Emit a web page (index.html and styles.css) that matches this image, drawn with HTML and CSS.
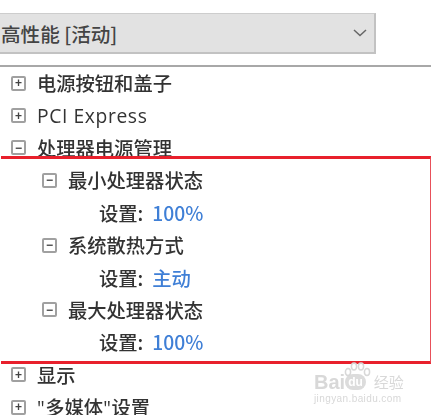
FILE: index.html
```html
<!DOCTYPE html>
<html lang="zh-CN">
<head>
  <meta charset="UTF-8">
  <title>电源选项</title>
  <link rel="stylesheet" href="styles.css">
</head>
<body>
  <div class="page">
    <div class="plan-select">
      <span>高性能 [活动]</span>
      <svg class="chevron" width="14" height="8" viewBox="0 0 14 8"><path d="M1 1l6 5.5L13 1" fill="none" stroke="#666" stroke-width="1.5"/></svg>
    </div>
    <div class="divider"></div>

    <ul class="tree">
      <li class="row"><span class="toggle">+</span>电源按钮和盖子</li>
      <li class="row"><span class="toggle">+</span><span class="latin">PCI Express</span></li>
      <li class="row"><span class="toggle">−</span>处理器电源管理</li>
      <li class="row sub"><span class="toggle">−</span>最小处理器状态</li>
      <li class="row setting">设置:<span class="value">100%</span></li>
      <li class="row sub"><span class="toggle">−</span>系统散热方式</li>
      <li class="row setting">设置:<span class="value">主动</span></li>
      <li class="row sub"><span class="toggle">−</span>最大处理器状态</li>
      <li class="row setting">设置:<span class="value">100%</span></li>
      <li class="row"><span class="toggle">+</span>显示</li>
      <li class="row"><span class="toggle">+</span><span class="latin">"</span>多媒体<span class="latin">"</span>设置</li>
    </ul>
  </div>

  <!-- red highlight drawn on top of the screenshot -->
  <div class="highlight"></div>

  <div class="watermark">
    <svg class="wm-paw" width="28" height="22" viewBox="0 0 28 22">
      <g fill="none" stroke="#d8d8d8" stroke-width="1.5">
        <ellipse cx="5" cy="10" rx="2.6" ry="3.4"/>
        <ellipse cx="11" cy="4.5" rx="2.6" ry="3.4"/>
        <ellipse cx="18" cy="4.5" rx="2.6" ry="3.4"/>
        <ellipse cx="24" cy="10" rx="2.6" ry="3.4"/>
      </g>
    </svg>
    <div class="wm-logo">Bai<span class="wm-du">du</span><span class="wm-cn">经验</span></div>
    <div class="wm-url">jingyan.baidu.com</div>
  </div>
</body>
</html>
```

FILE: styles.css
```css
html, body {
  margin: 0;
  padding: 0;
}
body {
  width: 431px;
  height: 415px;
  overflow: hidden;
  background-color: #ffffff;
  font-family: "Noto Sans CJK SC", "Open Sans", sans-serif;
  color: #333;
}
.page {
  filter: blur(0.7px);
  padding-top: 13px;
}
.plan-select {
  width: 376px;
  height: 41px;
  box-sizing: border-box;
  background-color: #e2e2e2;
  border: 1px solid #cdcdcd;
  border-left: none;
  border-right: 2px solid #c2c2c2;
  border-bottom: 2px solid #c2c2c2;
  display: flex;
  align-items: center;
  justify-content: space-between;
  padding: 0 7px 0 1px;
  font-size: 19.6px;
  font-weight: 500;
  color: #444;
}
.divider {
  height: 2px;
  background-color: #a8a8a8;
  margin-top: 11px;
}
.tree {
  list-style: none;
  margin: 0;
  padding: 0;
}
.row {
  height: 32.4px;
  display: flex;
  align-items: center;
  font-size: 19.3px;
  font-weight: 500;
  padding-left: 11px;
  white-space: pre;
}
.latin {
  font-family: "Open Sans", sans-serif;
  letter-spacing: 0.6px;
}
.sub {
  padding-left: 42px;
}
.setting {
  padding-left: 99px;
}
.toggle {
  width: 11px;
  height: 11px;
  border: 2px solid #a0a0a0;
  border-radius: 2px;
  margin-right: 11px;
  display: flex;
  align-items: center;
  justify-content: center;
  font-size: 12px;
  line-height: 1;
  color: #444;
  font-family: "Liberation Sans", sans-serif;
  font-weight: bold;
}
.value {
  color: #3f7fd6;
  margin-left: 9px;
}
.highlight {
  position: absolute;
  left: 1px;
  top: 156px;
  width: 430px;
  height: 208px;
  box-sizing: border-box;
  border-top: 3px solid #e8202c;
  border-bottom: 3px solid #e8202c;
  border-right: 1px solid #e8505a;
}
.watermark {
  position: absolute;
  left: 314px;
  top: 362px;
  width: 117px;
  color: #d8d8d8;
  font-family: "Liberation Sans", sans-serif;
  filter: blur(0.5px);
}
.wm-paw {
  position: absolute;
  left: 29px;
  top: 0;
}
.wm-logo {
  display: flex;
  align-items: center;
  margin-top: 9px;
  font-size: 20px;
  font-weight: bold;
  line-height: 22px;
  white-space: nowrap;
}
.wm-du {
  background-color: #dcdcdc;
  color: #ffffff;
  border-radius: 8px;
  font-size: 12px;
  line-height: 14px;
  padding: 1px 3px;
}
.wm-cn {
  margin-left: 8px;
  font-size: 15px;
  font-weight: normal;
  font-family: "Noto Sans CJK SC", sans-serif;
}
.wm-url {
  font-size: 10px;
  line-height: 12px;
  letter-spacing: 0.4px;
}
```
